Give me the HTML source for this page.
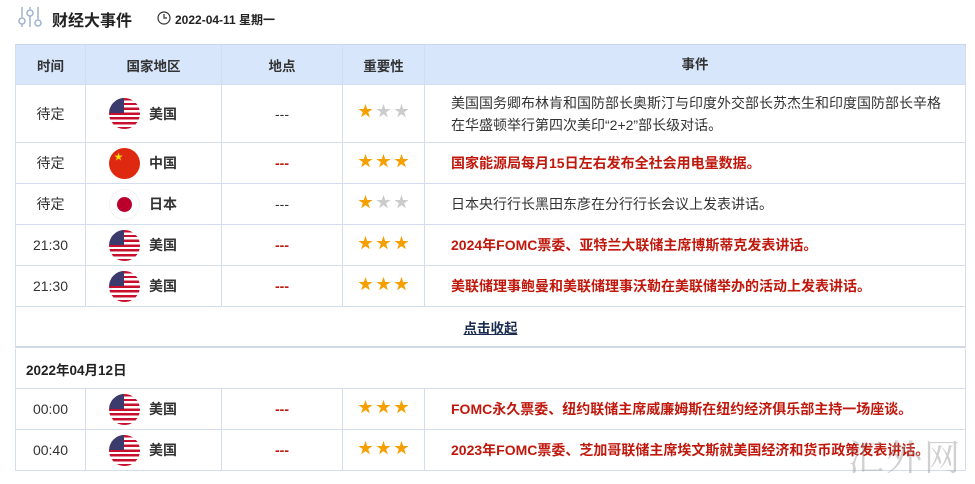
<!DOCTYPE html>
<html><head><meta charset="utf-8"><style>
*{margin:0;padding:0;box-sizing:border-box}
body{width:975px;height:484px;background:#fff;font-family:"Liberation Sans","Noto Sans CJK SC",sans-serif;font-size:14px;color:#333;position:relative;overflow:hidden}
.a{position:absolute}
.row{position:absolute;left:15px;width:951px;border-bottom:1px solid #d3ddee}
.c{position:absolute;top:0;height:100%;display:flex;align-items:center;justify-content:center;border-right:1px solid #d3ddee}
.c1{left:0;width:71px;border-left:1px solid #d3ddee}.c2{left:71px;width:136px;justify-content:flex-start;padding-left:23px}.c3{left:207px;width:121px}.c4{left:328px;width:82px}.c5{left:410px;width:541px;justify-content:flex-start;padding-left:26px;line-height:22px}
.hd .c{font-weight:bold;justify-content:center;padding:0;font-size:13.5px}
.flag{width:31px;height:31px;border-radius:50%;margin-right:9px;position:relative;overflow:hidden;flex:none}
.us{background:repeating-linear-gradient(#c8102e 0 2.4px,#fff 2.4px 4.8px)}
.us:after{content:"";position:absolute;left:0;top:0;width:15px;height:15px;background:#3c3b6e}
.cn{background:#de2910;color:#ffde00;font-size:9px;line-height:12px;padding:3px 0 0 5px}
.jp{background:#fff;box-shadow:0 0 0 1px #f3f3f3 inset}
.jp:after{content:"";position:absolute;left:8px;top:8px;width:15px;height:15px;border-radius:50%;background:#bc002d}
.st{font-size:15px;letter-spacing:3px;color:#f5a000;margin-top:-6px;margin-left:3px}
.g{color:#ccc}
.red{color:#c0180c;font-weight:bold}
.dash{color:#c0180c;font-weight:bold}
b{font-weight:bold}
</style></head><body>
<svg class="a" style="left:18px;top:6px" width="24" height="22" viewBox="0 0 24 22" fill="none" stroke="#9fb2cf" stroke-width="1.5"><line x1="4" y1="1" x2="4" y2="11"/><circle cx="4" cy="15" r="3"/><line x1="4" y1="18" x2="4" y2="21"/><line x1="12" y1="1" x2="12" y2="3"/><circle cx="12" cy="7" r="3"/><line x1="12" y1="10" x2="12" y2="21"/><line x1="20" y1="1" x2="20" y2="13"/><circle cx="20" cy="17" r="3"/></svg>
<div class="a" style="left:52px;top:7px;font-size:16px;font-weight:bold;color:#222">财经大事件</div>
<svg class="a" style="left:157px;top:11px" width="14" height="14" viewBox="0 0 14 14" fill="none" stroke="#333" stroke-width="1.2"><circle cx="7" cy="7" r="6"/><path d="M7 3v4h3"/></svg>
<div class="a" style="left:175px;top:11px;font-size:12px;font-weight:bold;color:#222">2022-04-11 星期一</div>

<div class="row hd" style="top:44px;height:41px;background:#d7e6fb;border-top:1px solid #c8d7ee">
<div class="c c1">时间</div><div class="c c2" style="justify-content:center;padding:0">国家地区</div><div class="c c3">地点</div><div class="c c4">重要性</div><div class="c c5" style="justify-content:center;padding:0">事件</div></div>

<div class="row" style="top:85px;height:58px"><div class="c c1">待定</div><div class="c c2"><div class="flag us"></div><b>美国</b></div><div class="c c3">---</div><div class="c c4"><span class="st">★<span class="g">★★</span></span></div><div class="c c5">美国国务卿布林肯和国防部长奥斯汀与印度外交部长苏杰生和印度国防部长辛格<br>在华盛顿举行第四次美印“2+2”部长级对话。</div></div>
<div class="row" style="top:143px;height:41px"><div class="c c1">待定</div><div class="c c2"><div class="flag cn">★</div><b>中国</b></div><div class="c c3 dash">---</div><div class="c c4"><span class="st">★★★</span></div><div class="c c5 red">国家能源局每月15日左右发布全社会用电量数据。</div></div>
<div class="row" style="top:184px;height:41px"><div class="c c1">待定</div><div class="c c2"><div class="flag jp"></div><b>日本</b></div><div class="c c3">---</div><div class="c c4"><span class="st">★<span class="g">★★</span></span></div><div class="c c5">日本央行行长黑田东彦在分行行长会议上发表讲话。</div></div>
<div class="row" style="top:225px;height:41px"><div class="c c1">21:30</div><div class="c c2"><div class="flag us"></div><b>美国</b></div><div class="c c3 dash">---</div><div class="c c4"><span class="st">★★★</span></div><div class="c c5 red">2024年FOMC票委、亚特兰大联储主席博斯蒂克发表讲话。</div></div>
<div class="row" style="top:266px;height:41px"><div class="c c1">21:30</div><div class="c c2"><div class="flag us"></div><b>美国</b></div><div class="c c3 dash">---</div><div class="c c4"><span class="st">★★★</span></div><div class="c c5 red">美联储理事鲍曼和美联储理事沃勒在美联储举办的活动上发表讲话。</div></div>
<div class="row" style="top:307px;height:41px;border-left:1px solid #d3ddee;border-right:1px solid #d3ddee;border-bottom:2px solid #cfd9ea;display:flex;align-items:center;justify-content:center"><span style="font-weight:bold;text-decoration:underline;color:#1a2a50;font-size:13.5px">点击收起</span></div>
<div class="row" style="top:349px;height:40px;border-left:1px solid #d3ddee;border-right:1px solid #d3ddee;display:flex;align-items:center;padding-left:10px"><b style="color:#222;font-size:13.5px">2022年04月12日</b></div>
<div class="row" style="top:389px;height:41px"><div class="c c1">00:00</div><div class="c c2"><div class="flag us"></div><b>美国</b></div><div class="c c3 dash">---</div><div class="c c4"><span class="st">★★★</span></div><div class="c c5 red">FOMC永久票委、纽约联储主席威廉姆斯在纽约经济俱乐部主持一场座谈。</div></div>
<div class="row" style="top:430px;height:41px"><div class="c c1">00:40</div><div class="c c2"><div class="flag us"></div><b>美国</b></div><div class="c c3 dash">---</div><div class="c c4"><span class="st">★★★</span></div><div class="c c5 red">2023年FOMC票委、芝加哥联储主席埃文斯就美国经济和货币政策发表讲话。</div></div>
<div class="a" style="left:848px;top:430px;font-size:36px;color:rgba(150,150,150,.45);font-family:'Noto Serif CJK SC',serif;letter-spacing:2px">汇外网</div>
</body></html>
